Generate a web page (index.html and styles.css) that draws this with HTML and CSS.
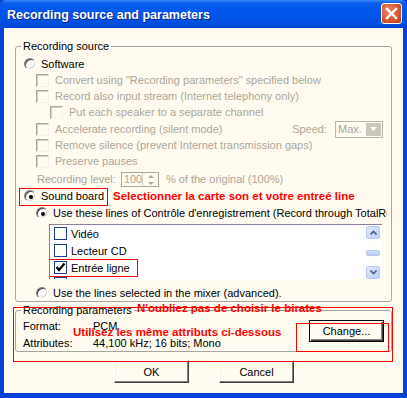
FILE: index.html
```html
<!DOCTYPE html>
<html lang="fr">
<head>
    <meta charset="UTF-8">
    <title>Recording source and parameters</title>
    <link rel="stylesheet" href="styles.css">
</head>
<body>
    <div class="window">
        <div class="titlebar">
            <span class="title">Recording source and parameters</span>
            <span class="close-btn">
                <svg width="13" height="13" viewBox="0 0 13 13"><path d="M2 2 L11 11 M11 2 L2 11" stroke="#fff" stroke-width="2.4" stroke-linecap="square"/></svg>
            </span>
        </div>

        <div class="client">
            <fieldset class="group source">
                <legend>Recording source</legend>
                <div class="group-body">
                    <div class="row">
                        <span class="radio"></span><span class="lbl">Software</span>
                    </div>
                    <div class="row indent1 disabled">
                        <span class="check"></span><span class="lbl">Convert using "Recording parameters" specified below</span>
                    </div>
                    <div class="row indent1 disabled">
                        <span class="check"></span><span class="lbl">Record also input stream (Internet telephony only)</span>
                    </div>
                    <div class="row indent2 disabled">
                        <span class="check"></span><span class="lbl">Put each speaker to a separate channel</span>
                    </div>
                    <div class="row indent1 disabled plus1">
                        <span class="check"></span><span class="lbl">Accelerate recording (silent mode)</span>
                        <span class="speed">Speed:</span>
                        <span class="combo"><span class="combo-text">Max.</span><span class="combo-btn"><svg width="7" height="4" viewBox="0 0 7 4"><path d="M0 0 H7 L3.5 4 Z" fill="#fff"/></svg></span></span>
                    </div>
                    <div class="row indent1 disabled">
                        <span class="check"></span><span class="lbl">Remove silence (prevent Internet transmission gaps)</span>
                    </div>
                    <div class="row indent1 disabled">
                        <span class="check"></span><span class="lbl">Preserve pauses</span>
                    </div>
                    <div class="row level disabled plus2">
                        <span class="lbl">Recording level:</span>
                        <span class="spin"><span class="spin-text">100</span><span class="spin-btns"><span class="spin-up"></span><span class="spin-down"></span></span></span>
                        <span class="lbl after-spin">% of the original (100%)</span>
                    </div>
                    <div class="row plus1">
                        <span class="radio on"></span><span class="lbl">Sound board</span>
                        <span class="note note-board">Selectionner la carte son et votre entreé line</span>
                        <span class="mark mark-board"></span>
                    </div>
                    <div class="row indent1 plus1 clip">
                        <span class="radio on"></span><span class="lbl">Use these lines of Contrôle d'enregistrement (Record through TotalRec</span>
                    </div>
                    <div class="listbox">
                        <div class="list-items">
                            <div class="item"><span class="xcheck"></span>Vidéo</div>
                            <div class="item"><span class="xcheck"></span>Lecteur CD</div>
                            <div class="item"><span class="xcheck checked"><svg width="11" height="11" viewBox="0 0 11 11"><path d="M1.5 5 L4 8 L9.5 1.5" stroke="#000" stroke-width="2.2" fill="none"/></svg></span>Entrée ligne<span class="mark mark-line"></span></div>
                            <div class="item"><span class="xcheck"></span>Micro</div>
                        </div>
                        <div class="scrollbar">
                            <span class="sb-btn"><svg width="7" height="5" viewBox="0 0 7 5"><path d="M0.5 4.5 L3.5 1.5 L6.5 4.5" stroke="#4d6185" stroke-width="1.6" fill="none"/></svg></span>
                            <span class="sb-track"><span class="sb-thumb"></span></span>
                            <span class="sb-btn"><svg width="7" height="5" viewBox="0 0 7 5"><path d="M0.5 0.5 L3.5 3.5 L6.5 0.5" stroke="#4d6185" stroke-width="1.6" fill="none"/></svg></span>
                        </div>
                    </div>
                    <div class="row indent1 mixer">
                        <span class="radio"></span><span class="lbl">Use the lines selected in the mixer (advanced).</span>
                    </div>
                </div>
            </fieldset>

            <fieldset class="group params">
                <legend>Recording parameters</legend>
                <span class="note note-bitrate">N'oubliez pas de choisir le birates</span>
                <div class="params-body">
                    <div class="attrs">
                        <span>Format:</span><span>PCM</span>
                        <span>Attributes:</span><span>44,100 kHz; 16 bits; Mono</span>
                    </div>
                    <button class="btn default change">Change...</button>
                </div>
                <span class="note note-attrs">Utilisez les même attributs ci-dessous</span>
                <span class="mark mark-change"></span>
                <span class="mark mark-params"></span>
            </fieldset>

            <div class="buttons">
                <button class="btn">OK</button>
                <button class="btn">Cancel</button>
            </div>
        </div>
    </div>
</body>
</html>
```

FILE: styles.css
```css
body {
    margin: 0;
    padding: 0;
    font-family: "Liberation Sans", "DejaVu Sans", sans-serif;
    font-size: 11px;
    color: #000;
    overflow: hidden;
}

.window {
    width: 407px;
    height: 398px;
    display: flex;
    flex-direction: column;
    background: #0842d4;
    box-sizing: border-box;
}

.titlebar {
    height: 28px;
    display: flex;
    align-items: center;
    padding: 0 5px 0 7px;
    background: linear-gradient(#3b8cf6 0, #0a5ee9 3px, #0058ee 8px, #0055e7 18px, #0049d9 26px, #0842d4 28px);
    border-radius: 6px 6px 0 0;
}

.title {
    flex: 1;
    color: #fff;
    font-weight: bold;
    font-size: 12.5px;
    font-family: "Liberation Sans", sans-serif;
    text-shadow: 1px 1px #0c2a8c;
    padding-top: 1px;
}

.close-btn {
    width: 19px;
    height: 19px;
    border: 1px solid #fff;
    border-radius: 3px;
    background: radial-gradient(circle at 35% 35%, #e9876a, #d24b25 70%, #b83a17);
    display: flex;
    align-items: center;
    justify-content: center;
    margin-top: -2px;
}

/* client area */
.client {
    flex: 1;
    margin: 0 4px 5px 4px;
    background: #fffbf0;
    padding: 12px 11px 0 11px;
    display: flex;
    flex-direction: column;
    position: relative;
}

.group {
    margin: 0;
    padding: 0;
    border: 1px solid #a5a5a2;
    border-radius: 3px;
    position: relative;
    min-width: 0;
}

.group legend {
    margin-left: 5px;
    padding: 0 2px;
    line-height: 13px;
}

.group-body {
    padding: 3px 8px 0 8px;
}

.row {
    display: flex;
    align-items: center;
    height: 16px;
    white-space: nowrap;
    position: relative;
}

.row.clip {
    overflow: hidden;
    margin-right: -4px;
}

.row.plus1 { margin-top: 1px; }
.row.plus2 { margin-top: 2px; }
.indent1 { padding-left: 12px; }
.indent2 { padding-left: 26px; }
.level { padding-left: 13px; }

.disabled { color: #aca899; }

.radio {
    width: 10px;
    height: 10px;
    border-radius: 50%;
    border: 1px solid;
    border-color: #808080 #fff #fff #808080;
    box-shadow: inset 1px 1px #404040, inset -1px -1px #d4d0c8;
    background: #fff;
    margin-right: 5px;
    position: relative;
    flex: none;
}

.radio.on::after {
    content: "";
    position: absolute;
    left: 4px;
    top: 4px;
    width: 4px;
    height: 4px;
    border-radius: 50%;
    background: #000;
}

.check {
    width: 11px;
    height: 11px;
    border: 1px solid;
    border-color: #aca899 #f4f2ea #f4f2ea #aca899;
    box-shadow: inset 1px 1px #d5d2c6;
    margin-right: 6px;
    flex: none;
}

.speed {
    margin-left: auto;
    margin-right: 8px;
}

.combo {
    display: flex;
    width: 46px;
    height: 15px;
    border: 1px solid #bab6a7;
    background: #fffbf0;
}

.combo-text {
    flex: 1;
    padding-left: 2px;
    line-height: 15px;
}

.combo-btn {
    width: 15px;
    height: 13px;
    margin: 1px;
    background: #cbc8bb;
    display: flex;
    align-items: center;
    justify-content: center;
}

.spin {
    display: flex;
    width: 36px;
    height: 13px;
    border: 1px solid #aca899;
    margin-left: 5px;
    margin-right: 7px;
}

.spin-text {
    flex: 1;
    padding-left: 2px;
    line-height: 13px;
}

.spin-btns {
    width: 15px;
    display: flex;
    flex-direction: column;
    border-left: 1px solid #d5d2c6;
}

.spin-up, .spin-down {
    flex: 1;
    position: relative;
}

.spin-up::after, .spin-down::after {
    content: "";
    position: absolute;
    left: 5px;
    border: 3px solid transparent;
}

.spin-up::after { border-bottom-color: #aca899; top: -1px; }
.spin-down::after { border-top-color: #aca899; top: 3px; }

.note {
    color: #f00;
    font-weight: bold;
    font-family: "Liberation Sans", sans-serif;
    font-size: 11.5px;
}

.note-board { margin-left: 9px; }

.mark {
    position: absolute;
    border: 1px solid #f00;
    pointer-events: none;
}

.mark-board {
    left: -5px;
    top: 0;
    width: 87px;
    height: 16px;
}

/* list of lines */
.listbox {
    display: flex;
    margin: 3px 0 0 25px;
    height: 55px;
    width: 333px;
    background: #fff;
    border-top: 1px solid #8b7ea0;
    border-left: 1px solid #7f7f7f;
    box-sizing: border-box;
    position: relative;
}

.list-items {
    flex: 1;
    padding: 0 0 0 4px;
    height: 54px;
    overflow: hidden;
}

.item {
    display: flex;
    align-items: center;
    height: 17px;
    position: relative;
}

.item:last-child {
    align-items: flex-start;
    padding-top: 1px;
}

.xcheck {
    width: 11px;
    height: 11px;
    border: 1px solid #1c3e8c;
    background: #fff;
    margin-right: 4px;
    display: flex;
    align-items: center;
    justify-content: center;
    flex: none;
}

.mark-line {
    left: -15px;
    top: 0;
    width: 97px;
    height: 16px;
}

.scrollbar {
    width: 15px;
    display: flex;
    flex-direction: column;
    padding: 1px 1px 0 0;
}

.sb-btn {
    width: 14px;
    height: 13px;
    border: 1px solid #b7c9f0;
    border-radius: 2px;
    background: linear-gradient(135deg, #e1ebfd, #b8cff8);
    display: flex;
    align-items: center;
    justify-content: center;
    box-sizing: border-box;
}

.sb-track {
    flex: 1;
    display: flex;
    align-items: center;
    background: #fefefb;
}

.sb-thumb {
    width: 14px;
    height: 6px;
    border-radius: 2px;
    background: linear-gradient(#d4e2fc, #b5ccf6);
    border: 1px solid #b9c9ee;
    box-sizing: border-box;
}

.mixer { margin: 6px 0 0 0; }

/* recording parameters */
.params {
    margin-top: 2px;
}

.params-body {
    display: flex;
    height: 34px;
    padding: 0 7px 0 7px;
}

.attrs {
    flex: 1;
    display: grid;
    grid-template-columns: 70px auto;
    grid-auto-rows: 17px;
    align-items: center;
}

.note-bitrate {
    position: absolute;
    left: 121px;
    top: -15px;
}

.note-attrs {
    position: absolute;
    left: 57px;
    top: 9px;
}

.mark-params {
    left: -3px;
    top: -10px;
    width: 378px;
    height: 53px;
}

.mark-change {
    left: 280px;
    top: 6px;
    width: 91px;
    height: 27px;
}

.btn {
    width: 75px;
    height: 23px;
    font-family: "Liberation Sans", sans-serif;
    font-size: 11px;
    background: #fffbf0;
    border: 1px solid;
    border-color: #fff #404040 #404040 #fff;
    box-shadow: inset -1px -1px #808080, inset 1px 1px #f4f2ea;
    padding: 0;
    color: #000;
}

.btn.default {
    border: 1px solid #000;
    box-shadow: inset 1px 1px #fff, inset -1px -1px #404040, inset -2px -2px #808080;
}

.change {
    height: 22px;
    margin-top: 3px;
}

.buttons {
    display: flex;
    justify-content: center;
    gap: 30px;
    margin-top: 8px;
    padding-left: 1px;
}
```
